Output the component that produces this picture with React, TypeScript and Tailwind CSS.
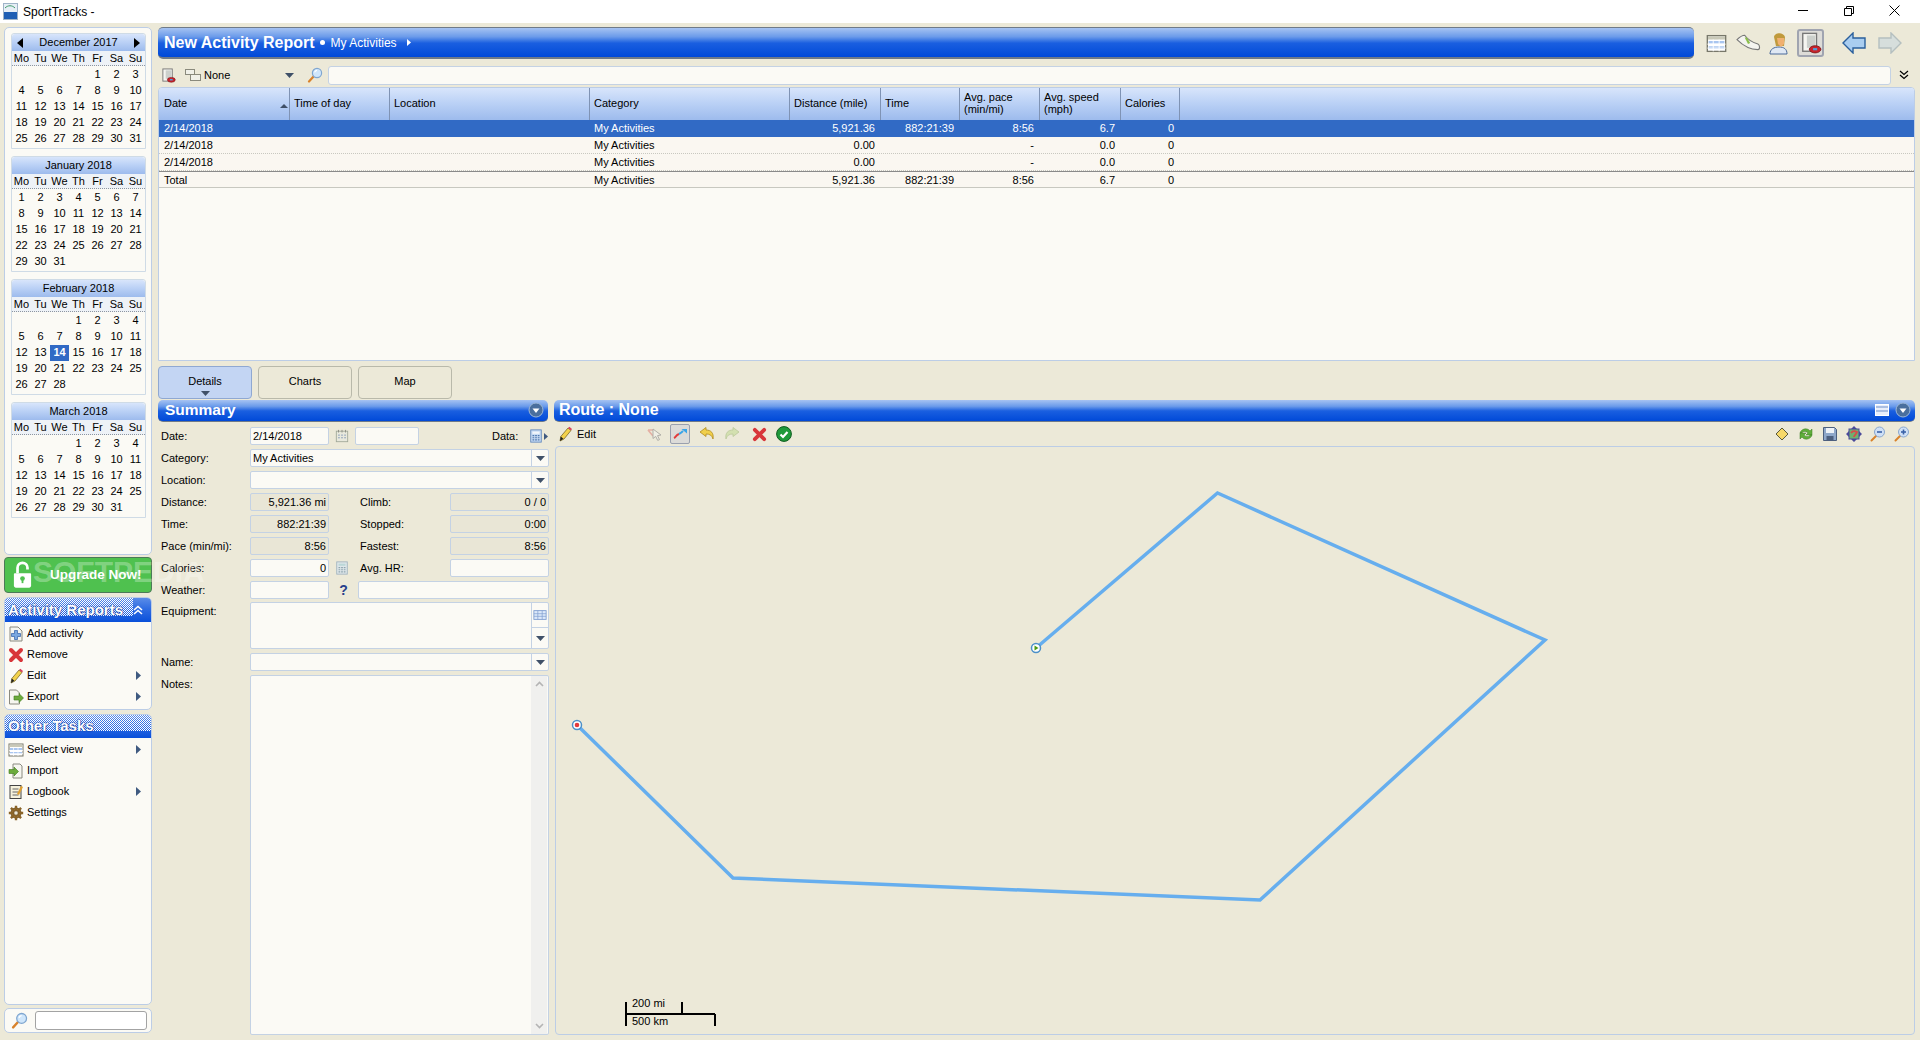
import type { ReactNode } from "react";

const months = [
  { name: "December 2017", start: 4, len: 31, nav: true },
  { name: "January 2018", start: 0, len: 31 },
  { name: "February 2018", start: 3, len: 28, today: 14 },
  { name: "March 2018", start: 3, len: 31 },
];
const dayNames = ["Mo", "Tu", "We", "Th", "Fr", "Sa", "Su"];

const titleBar = "bg-[linear-gradient(#a6c3f2_0%,#6b9bea_30%,#1a5fe0_52%,#0049d8_100%)]";
const taskBar = "bg-[linear-gradient(#5a8ce8_0%,#2f6ce2_45%,#0a50da_100%)]";
const softHeader = "bg-[linear-gradient(#d8e5fb_0%,#bcd2f6_45%,#9dbbed_100%)]";

function Ico({ size = 16, children, className }: { size?: number; children: ReactNode; className?: string }) {
  return (
    <svg width={size} height={size} viewBox="0 0 16 16" className={"shrink-0 " + (className || "")}>
      {children}
    </svg>
  );
}

function Magnifier({ size = 16 }: { size?: number }) {
  return (
    <Ico size={size}>
      <path d="M2 14.5 7 9" stroke="#d9822b" strokeWidth="2.2" strokeLinecap="round" />
      <circle cx="10" cy="6" r="4.6" fill="#cfe6fb" stroke="#7fa6d0" strokeWidth="1.2" />
      <path d="M7.6 5.4a2.6 2.6 0 0 1 2.4-2" stroke="#fff" strokeWidth="1.2" fill="none" />
    </Ico>
  );
}

function Zoomer({ plus }: { plus?: boolean }) {
  return (
    <Ico>
      <path d="M1.5 14.5 6 10" stroke="#d9822b" strokeWidth="2" strokeLinecap="round" />
      <circle cx="9.5" cy="6" r="5" fill="#cfe0f6" stroke="#88a7cf" />
      <path d="M7 6h5" stroke="#3a62a8" strokeWidth="1.6" />
      {plus && <path d="M9.5 3.5v5" stroke="#3a62a8" strokeWidth="1.6" />}
    </Ico>
  );
}

function Caret({ className }: { className?: string }) {
  return (
    <svg width="9" height="5" viewBox="0 0 9 5" className={"shrink-0 " + (className || "")}>
      <path d="M0 0h9L4.5 5z" fill="#3f5068" />
    </svg>
  );
}

function RightArrow() {
  return (
    <svg width="5" height="9" viewBox="0 0 5 9" className="shrink-0 ml-auto mr-[10px]">
      <path d="M0 0l5 4.5L0 9z" fill="#3f5a80" />
    </svg>
  );
}

function RedX({ size = 14 }: { size?: number }) {
  return (
    <Ico size={size}>
      <path d="M3 3l10 10M13 3 3 13" stroke="#d8363a" strokeWidth="4" strokeLinecap="round" />
    </Ico>
  );
}

function Pencil({ size = 16 }: { size?: number }) {
  return (
    <Ico size={size}>
      <path d="M3 15l.8-4.5L11 2l3 2.4-7 8.6z" fill="#f3d24c" stroke="#6a5a1c" strokeWidth=".7" />
      <path d="M11 2l3 2.4 1-1.4L12.4.8z" fill="#d9415f" />
      <path d="M3 15l.8-4.5 2.6 2.2z" fill="#222" />
    </Ico>
  );
}

function PageArrow() {
  return (
    <Ico>
      <path d="M1.5 1h7l3 3v11h-10z" fill="#f6f6f0" stroke="#8a8a80" />
      <path d="M6 7h5V4.500L15.500 9 11 13.500V11H6z" fill="#6cab3c" stroke="#3f7a1e" strokeWidth=".6" />
    </Ico>
  );
}

function ImportIcon() {
  return (
    <Ico>
      <path d="M5 1h7l2 2v12H5z" fill="#f6f6f0" stroke="#8a8a80" />
      <path d="M1 6.500h5V4l4.500 4.500L6 13v-2.500H1z" fill="#6cab3c" stroke="#3f7a1e" strokeWidth=".6" />
    </Ico>
  );
}

function Gear() {
  return (
    <Ico>
      <circle cx="8" cy="8" r="5" fill="#a67c3a" stroke="#6b4c1e" />
      <path d="M8 .8v14.4M.8 8h14.4M2.900 2.900l10.200 10.200M13.100 2.900 2.900 13.100" stroke="#8a6428" strokeWidth="2.4" />
      <circle cx="8" cy="8" r="2.2" fill="#ece9d8" stroke="#6b4c1e" strokeWidth=".7" />
    </Ico>
  );
}

function GridIcon({ size = 16 }: { size?: number }) {
  return (
    <Ico size={size}>
      <rect x="1" y="2" width="14" height="12" fill="#fff" stroke="#77776a" />
      <path d="M1.500 2.500h13V5h-13z" fill="#c9c9b8" />
      <path d="M2 6h12v2H2zM2 10h12v2H2z" fill="#a9c6f0" />
      <path d="M5.500 5v9M10 5v9M1 8.500h14M1 11.500h14" stroke="#fff" strokeWidth=".7" />
    </Ico>
  );
}

function ReportIcon({ size = 16 }: { size?: number }) {
  return (
    <Ico size={size}>
      <rect x="2" y="1" width="10" height="13" fill="#f5f5f0" stroke="#777" />
      <rect x="5" y="2.500" width="6" height="9" fill="#ccd0cc" />
      <ellipse cx="11" cy="12.600" rx="4.200" ry="2.600" fill="#c9232b" stroke="#7a1114" strokeWidth=".6" />
      <path d="M9.500 12.500h3" stroke="#4f9dd8" strokeWidth="1.6" />
    </Ico>
  );
}

function CalcIcon({ className, tint }: { className?: string; tint?: boolean }) {
  return (
    <Ico size={14} className={className}>
      <rect x="2" y="1" width="12" height="14" fill={tint ? "#c8dcf4" : "#dfe7ea"} stroke={tint ? "#5f86bc" : "#9fb2bd"} />
      <rect x="4" y="3" width="8" height="2.500" fill={tint ? "#f2f6fb" : "#bcd7d8"} />
      <path d="M4 7.500h2M7 7.500h2M10 7.500h2M4 10h2M7 10h2M10 10h2M4 12.500h2M7 12.500h2M10 12.500h2" stroke={tint ? "#4f78ae" : "#8ea4ad"} strokeWidth="1.3" />
    </Ico>
  );
}

function Month({ m }: { m: (typeof months)[number] }) {
  return (
    <div className="h-[116px] w-[135px] border border-[#cfdbe6] rounded-t-[3px]">
      <div className={"h-[17px] flex items-center justify-between px-[5px] text-[11px] leading-none rounded-t-[3px] " + softHeader}>
        {m.nav ? <span className="w-0 h-0 border-y-[5px] border-y-transparent border-r-[6px] border-r-black" /> : <span />}
        <span>{m.name}</span>
        {m.nav ? <span className="w-0 h-0 border-y-[5px] border-y-transparent border-l-[6px] border-l-black" /> : <span />}
      </div>
      <div className="h-[15px] grid grid-cols-[repeat(7,19px)] bg-[#eef2f7] border-b border-dotted border-[#8e96a0] text-[11px] leading-[15px] text-center">
        {dayNames.map((d) => (
          <span key={d}>{d}</span>
        ))}
      </div>
      <div className="grid grid-cols-[repeat(7,19px)] auto-rows-[16px] pt-[1px] text-[11px] leading-[15px] text-center">
        {Array.from({ length: m.start }).map((_, i) => (
          <span key={"e" + i} />
        ))}
        {Array.from({ length: m.len }).map((_, i) =>
          m.today === i + 1 ? (
            <span key={i} className="bg-[#316ac5] text-white font-bold">
              {i + 1}
            </span>
          ) : (
            <span key={i}>{i + 1}</span>
          )
        )}
      </div>
    </div>
  );
}

function TaskRow({ icon, label, arrow }: { icon: ReactNode; label: string; arrow?: boolean }) {
  return (
    <div className="h-[21px] flex items-center pl-[3px] gap-[3px] text-[11px]">
      {icon}
      <span>{label}</span>
      {arrow && <RightArrow />}
    </div>
  );
}

function Dither({ className }: { className: string }) {
  return (
    <div
      className={
        "absolute bg-[repeating-conic-gradient(#ffffff_0_25%,transparent_0_50%)] bg-[length:2px_2px] " + className
      }
    />
  );
}

function Sidebar() {
  const heading = "relative [text-shadow:0_0_2px_#06309a,0_0_1px_#06309a]";
  return (
    <div className="w-[148px] shrink-0 flex flex-col">
      <div className="h-[528px] bg-[#fbfaf5] border border-[#bccde6] rounded-[5px] pt-[5px] pl-[6px] flex flex-col gap-[7px]">
        {months.map((m) => (
          <Month key={m.name} m={m} />
        ))}
      </div>
      <div className="h-[36px] mt-[2px] bg-[#4fc14f] border border-[#4c7a58] rounded-[4px] flex items-center pl-[8px] gap-[18px] text-white font-bold text-[13.5px]">
        <svg width="19" height="28" viewBox="0 0 21 30" className="shrink-0">
          <path d="M5 13V7a5.500 5.500 0 0 1 11 0v2" fill="none" stroke="#fff" strokeWidth="3" />
          <path d="M2 13h17a1 1 0 0 1 1 1v13a2 2 0 0 1-2 2H3a2 2 0 0 1-2-2V14a1 1 0 0 1 1-1z" fill="#fff" />
          <circle cx="10.500" cy="19" r="2.600" fill="#4fc14f" />
          <path d="M9.500 20h2v4h-2z" fill="#4fc14f" />
        </svg>
        <span className="relative z-30">Upgrade Now!</span>
      </div>
      <div className="h-[113px] mt-[4px] bg-[#fbfaf5] border border-[#bccde6] rounded-[5px] overflow-hidden">
        <div className={"relative h-[24px] flex items-center pl-[3px] text-white font-bold text-[15px] " + taskBar}>
          <Dither className="left-0 top-0 w-[128px] h-[18px]" />
          <span className={heading}>Activity Reports</span>
          <svg width="10" height="10" viewBox="0 0 10 10" className="absolute right-[8px] top-[7px]">
            <path d="M1 5l4-3.500L9 5M1 9l4-3.500L9 9" fill="none" stroke="#fff" strokeWidth="1.6" />
          </svg>
        </div>
        <div className="pt-[1px]">
          <TaskRow
            label="Add activity"
            icon={
              <Ico>
                <path d="M2 1h8l4 4v10H2z" fill="#f5f5f0" stroke="#8a8a80" />
                <path d="M6.500 4.500h3v3h3v3h-3v3h-3v-3h-3v-3h3z" fill="#7aa8e0" stroke="#2f5ea8" strokeWidth=".7" />
              </Ico>
            }
          />
          <TaskRow label="Remove" icon={<RedX size={16} />} />
          <TaskRow label="Edit" arrow icon={<Pencil />} />
          <TaskRow label="Export" arrow icon={<PageArrow />} />
        </div>
      </div>
      <div className="h-[291px] mt-[4px] bg-[#fbfaf5] border border-[#bccde6] rounded-[5px] overflow-hidden">
        <div className={"relative h-[23px] flex items-center pl-[3px] text-white font-bold text-[15px] " + taskBar}>
          <Dither className="left-0 top-0 w-full h-[16px]" />
          <span className={heading}>Other Tasks</span>
        </div>
        <div className="pt-[1px]">
          <TaskRow label="Select view" arrow icon={<GridIcon />} />
          <TaskRow label="Import" icon={<ImportIcon />} />
          <TaskRow
            label="Logbook"
            arrow
            icon={
              <Ico>
                <rect x="2" y="1.500" width="11" height="13" fill="#f5f1dc" stroke="#444" />
                <path d="M4.500 5h6M4.500 8h6M4.500 11h6" stroke="#666" />
                <path d="M9 10l4-8 2 1-4 8z" fill="#e0a030" />
              </Ico>
            }
          />
          <TaskRow label="Settings" icon={<Gear />} />
        </div>
      </div>
      <div className="h-[25px] mt-[3px] bg-[#fbfaf5] border border-[#bccde6] rounded-[5px] flex items-center pl-[6px] gap-[7px]">
        <Magnifier size={17} />
        <div className="w-[112px] h-[19px] bg-white border border-[#a3a3a3] rounded-[3px]" />
      </div>
    </div>
  );
}

const columnGrid = "grid grid-cols-[131px_100px_200px_200px_91px_79px_80px_81px_59px]";

function ActivityRow({ date, dist, time, pace, speed, selected, total }: { date: string; dist: string; time: string; pace: string; speed: string; selected?: boolean; total?: boolean }) {
  const tone = selected ? "bg-[#316ac5] text-white" : "bg-[#faf7f1] text-black border-b border-dotted border-[#c8c8c0]";
  return (
    <div className={"h-[17px] text-[11px] leading-[16px] " + tone + (total ? " border-t border-t-[#8a8a8a] border-solid" : "")}>
      <div className={columnGrid}>
        <span className="pl-[5px]">{date}</span>
        <span />
        <span />
        <span className="pl-[4px]">My Activities</span>
        <span className="pr-[6px] text-right">{dist}</span>
        <span className="pr-[6px] text-right">{time}</span>
        <span className="pr-[6px] text-right">{pace}</span>
        <span className="pr-[6px] text-right">{speed}</span>
        <span className="pr-[6px] text-right">0</span>
      </div>
    </div>
  );
}

function ActivityTable() {
  const heads = ["Date", "Time of day", "Location", "Category", "Distance (mile)", "Time", "Avg. pace\n(min/mi)", "Avg. speed\n(mph)", "Calories"];
  return (
    <div className="h-[274px] bg-[#fbfaf5] border border-[#bccde6] rounded-t-[4px] overflow-hidden">
      <div className={"h-[32px] text-[11px] " + softHeader}>
        <div className={"h-full " + columnGrid}>
          {heads.map((h, i) => (
            <div key={h} className={"relative flex items-center pb-[2px] leading-[12px] whitespace-pre-line border-r border-[#7f93b4] " + (i === 0 ? "pl-[5px]" : "pl-[4px]")}>
              {h}
              {i === 0 && <span className="absolute right-[1px] top-[16px] w-0 h-0 border-x-[4px] border-x-transparent border-b-[4px] border-b-[#3f5068]" />}
            </div>
          ))}
        </div>
      </div>
      <ActivityRow selected date="2/14/2018" dist="5,921.36" time="882:21:39" pace="8:56" speed="6.7" />
      <ActivityRow date="2/14/2018" dist="0.00" time="" pace="-" speed="0.0" />
      <ActivityRow date="2/14/2018" dist="0.00" time="" pace="-" speed="0.0" />
      <ActivityRow total date="Total" dist="5,921.36" time="882:21:39" pace="8:56" speed="6.7" />
    </div>
  );
}

function Box({ className, children, ro }: { className?: string; children?: ReactNode; ro?: boolean }) {
  return (
    <div className={"h-[18px] border border-[#c4d2e4] rounded-[2px] flex items-center px-[2px] text-[11px] leading-none shrink-0 " + (ro ? "bg-[#e9e6d6] justify-end " : "bg-[#fbfaf5] ") + (className || "")}>
      {children}
    </div>
  );
}

function Combo({ value }: { value?: string }) {
  return (
    <div className="w-[299px] h-[18px] border border-[#c4d2e4] rounded-[2px] bg-[#fbfaf5] flex items-center text-[11px] leading-none">
      <span className="flex-1 pl-[2px]">{value}</span>
      <span className="w-[17px] h-full border-l border-[#c4d2e4] flex items-center justify-center">
        <Caret />
      </span>
    </div>
  );
}

function Row({ label, children }: { label: string; children: ReactNode }) {
  return (
    <div className="h-[18px] flex items-center text-[11px]">
      <span className="w-[92px] shrink-0 pl-[3px]">{label}</span>
      {children}
    </div>
  );
}

function PairRow({ label, value, label2, value2, ro }: { label: string; value: string; label2: string; value2?: string; ro?: boolean }) {
  return (
    <Row label={label}>
      <Box ro={ro} className={"w-[79px] " + (ro ? "" : "justify-end")}>{value}</Box>
      {ro ? <span className="w-[31px]" /> : <span className="w-[31px] pl-[6px]"><CalcIcon /></span>}
      <span className="w-[90px]">{label2}</span>
      <Box ro={ro} className={"w-[99px] " + (ro ? "" : "justify-end")}>{value2}</Box>
    </Row>
  );
}

function Summary() {
  return (
    <div className="w-[392px] shrink-0 flex flex-col">
      <div className={"h-[22px] w-[390px] flex items-center pl-[7px] pr-[4px] pb-[1px] justify-between rounded-[5px] border-b border-[#6f7a88] text-white font-bold text-[15.5px] " + titleBar}>
        Summary
        <svg width="16" height="16" viewBox="0 0 16 16">
          <circle cx="8" cy="8" r="7" fill="#4a6f9e" stroke="#9db7d6" />
          <path d="M4.500 6.500h7L8 11z" fill="#fff" />
        </svg>
      </div>
      <div className="flex flex-col gap-[4px] pt-[5px] flex-1">
        <Row label="Date:">
          <Box className="w-[79px]">2/14/2018</Box>
          <span className="w-[26px] pl-[6px]">
            <Ico size={14}>
              <rect x="1.500" y="2.500" width="13" height="12" fill="#e8e8dc" stroke="#a0a898" />
              <path d="M4 1v3M8 1v3M12 1v3" stroke="#8a8a80" />
              <path d="M3.500 7h2M7 7h2M10.500 7h2M3.500 10h2M7 10h2M10.500 10h2" stroke="#7f93b4" />
            </Ico>
          </span>
          <Box className="w-[64px]" />
          <span className="ml-[73px] w-[37px]">Data:</span>
          <CalcIcon tint />
          <svg width="4" height="7" viewBox="0 0 4 7" className="ml-[1px]">
            <path d="M0 0l4 3.500L0 7z" fill="#3f5a80" />
          </svg>
        </Row>
        <Row label="Category:">
          <Combo value="My Activities" />
        </Row>
        <Row label="Location:">
          <Combo />
        </Row>
        <PairRow ro label="Distance:" value="5,921.36 mi" label2="Climb:" value2="0 / 0" />
        <PairRow ro label="Time:" value="882:21:39" label2="Stopped:" value2="0:00" />
        <PairRow ro label="Pace (min/mi):" value="8:56" label2="Fastest:" value2="8:56" />
        <PairRow label="Calories:" value="0" label2="Avg. HR:" />
        <Row label="Weather:">
          <Box className="w-[79px]" />
          <span className="w-[29px] text-center font-bold text-[14px] text-[#27408b]">?</span>
          <Box className="w-[191px]" />
        </Row>
        <div className="flex text-[11px] mt-[-1px]">
          <span className="w-[92px] shrink-0 pl-[3px] pt-[1px]">Equipment:</span>
          <div className="w-[299px] h-[47px] border border-[#c4d2e4] rounded-[2px] bg-[#fbfaf5] flex justify-end">
            <div className="w-[17px] border-l border-[#c4d2e4] flex flex-col">
              <div className="h-[25px] border-b border-[#c4d2e4] flex items-center justify-center">
                <Ico size={14}>
                  <rect x="1" y="3" width="14" height="10" fill="#dbe8fa" stroke="#7f9ed0" />
                  <path d="M1 6.500h14M1 9.500h14M5.500 3v10M10.500 3v10" stroke="#7f9ed0" strokeWidth=".8" />
                </Ico>
              </div>
              <div className="flex-1 flex items-center justify-center">
                <Caret />
              </div>
            </div>
          </div>
        </div>
        <Row label="Name:">
          <Combo />
        </Row>
        <div className="flex flex-1 text-[11px] mb-[5px]">
          <span className="w-[92px] shrink-0 pl-[3px] pt-[1px]">Notes:</span>
          <div className="w-[299px] border border-[#c4d2e4] rounded-[2px] bg-[#fbfaf5] flex justify-end">
            <div className="w-[16px] bg-[#f0f0ee] flex flex-col items-center justify-between py-[5px] mr-[1px]">
              <svg width="9" height="6" viewBox="0 0 9 6"><path d="M1 5l3.500-3.500L8 5" fill="none" stroke="#b4b4b4" strokeWidth="1.6" /></svg>
              <svg width="9" height="6" viewBox="0 0 9 6"><path d="M1 1l3.500 3.500L8 1" fill="none" stroke="#b4b4b4" strokeWidth="1.6" /></svg>
            </div>
          </div>
        </div>
      </div>
    </div>
  );
}

function RouteToolbar() {
  return (
    <div className="h-[24px] flex items-center pl-[3px] pr-[5px] text-[11px]">
      <Pencil />
      <span className="ml-[4px]">Edit</span>
      <span className="ml-[49px] w-[20px] flex justify-center opacity-60">
        <Ico>
          <path d="M1 4h6M1 4l5 6" stroke="#e08a80" strokeWidth="1.6" fill="none" />
          <path d="M6 3l8 6-3.500.6 2 4-1.800.8-2-4L6 12.500z" fill="#f4f4ee" stroke="#888" />
        </Ico>
      </span>
      <span className="w-[20px] h-[20px] flex items-center justify-center border border-[#9aa0ae] rounded-[2px] bg-[#dcdbd8] ml-[5px]">
        <Ico>
          <path d="M2 12c2-1 2-3 5-4" stroke="#e33b3b" strokeWidth="2" fill="none" />
          <path d="M7 8c2-1 3-2 4-3" stroke="#3aa5e8" strokeWidth="2" fill="none" />
          <path d="M9.500 3H15v4.500z" fill="#3aa5e8" />
        </Ico>
      </span>
      <span className="ml-[9px]">
        <Ico>
          <path d="M1 6l6-4.500V4c5 0 8 3 7 9-1-3.500-3-5-7-5v2.500z" fill="#f0cf4a" stroke="#b08a1c" strokeWidth=".8" />
        </Ico>
      </span>
      <span className="ml-[9px] opacity-50">
        <Ico>
          <path d="M15 6 9 1.500V4C4 4 1 7 2 13c1-3.500 3-5 7-5v2.500z" fill="#bcd98a" stroke="#8aa860" strokeWidth=".8" />
        </Ico>
      </span>
      <span className="ml-[12px]">
        <RedX size={15} />
      </span>
      <span className="ml-[9px]">
        <Ico>
          <circle cx="8" cy="8" r="7.400" fill="#1f9a3a" stroke="#0f5c20" />
          <path d="M4.500 8.500l2.500 2.500 4.500-5" stroke="#fff" strokeWidth="2.200" fill="none" />
        </Ico>
      </span>
      <div className="ml-auto flex items-center gap-[8px]">
        <Ico>
          <path d="M8 2l6 6-6 6-6-6z" fill="#f6d868" stroke="#5a5a3c" />
        </Ico>
        <Ico>
          <path d="M2 7c1-4 7-6 10-2l2-2v6H8l2-2c-2-2-5-2-6 0z" fill="#5fae3a" stroke="#3a7a20" strokeWidth=".5" />
          <path d="M14 9c-1 4-7 6-10 2l-2 2V7h6l-2 2c2 2 5 2 6 0z" fill="#5fae3a" stroke="#3a7a20" strokeWidth=".5" />
        </Ico>
        <Ico>
          <path d="M1.500 1.500h11l2 2v11h-13z" fill="#8ea7c9" stroke="#4c5f7e" />
          <rect x="4" y="2" width="8" height="5" fill="#eef2f7" />
          <rect x="4.500" y="10" width="7" height="4.500" fill="#4c5f7e" />
        </Ico>
        <Ico>
          <path d="M8 0l3 3H5zM8 16l-3-3h6zM0 8l3-3v6zM16 8l-3 3V5z" fill="#4a4a9a" />
          <rect x="3" y="3" width="10" height="10" fill="#6fb070" stroke="#4a4a9a" />
          <path d="M5 7c2-3 4-2 6-1-1 3-3 3-3 5" stroke="#d84a4a" strokeWidth="1.800" fill="none" />
        </Ico>
        <Zoomer />
        <Zoomer plus />
      </div>
    </div>
  );
}

function RouteCanvas() {
  return (
    <div className="relative flex-1 mb-[5px] border border-[#bccde6] rounded-[4px] bg-[#ece9d8] ml-[1px]">
      <svg className="absolute left-0 top-0 w-full h-full">
        <polyline points="480,201 661.500,46 989,193 704,453 177,431 21,278" fill="none" stroke="#66aeee" strokeWidth="3.500" />
        <circle cx="480" cy="201" r="4.500" fill="#fff" stroke="#4c90c8" strokeWidth="1.500" />
        <path d="M478.500 198.500l4 2.500-4 2.500z" fill="#4c9a10" />
        <circle cx="21" cy="278" r="4.500" fill="#fff" stroke="#4c90c8" strokeWidth="1.500" />
        <circle cx="21" cy="278" r="2.300" fill="#e23a3a" />
        <path d="M70 555v24M70 567h89M126 555v12M159 567v12" stroke="#000" strokeWidth="2" fill="none" />
      </svg>
      <span className="absolute left-[76px] top-[550px] text-[11px] leading-[13px]">200 mi</span>
      <span className="absolute left-[76px] top-[568px] text-[11px] leading-[13px]">500 km</span>
    </div>
  );
}

function RoutePanel() {
  return (
    <div className="flex-1 flex flex-col ml-[4px] min-w-0">
      <div className={"h-[22px] flex items-center pl-[5px] pr-[4px] pb-[1px] rounded-[5px] border-b border-[#6f7a88] text-white font-bold text-[16px] " + titleBar}>
        Route : None
        <svg width="14" height="14" viewBox="0 0 14 14" className="ml-auto mr-[6px]">
          <rect x=".5" y="1.500" width="13" height="11" fill="#e8eefb" stroke="#fff" />
          <path d="M1 4h12M1 8h12" stroke="#6f8fc8" />
        </svg>
        <svg width="16" height="16" viewBox="0 0 16 16">
          <circle cx="8" cy="8" r="7" fill="#4a6f9e" stroke="#9db7d6" />
          <path d="M4.500 6.500h7L8 11z" fill="#fff" />
        </svg>
      </div>
      <RouteToolbar />
      <RouteCanvas />
    </div>
  );
}

export default function App() {
  return (
    <div className="relative h-[1040px] w-[1920px] overflow-hidden bg-[#ece9d8] text-black font-['Liberation_Sans',Arial,sans-serif]">
      <div className="h-[23px] bg-white flex items-center pl-[3px] text-[12px]">
        <svg width="15" height="17" viewBox="0 0 15 17" className="shrink-0">
          <rect x=".5" y=".5" width="14" height="16" fill="#e6eef6" stroke="#9fb4c8" />
          <path d="M2 5c3-3 7-3 10 0" stroke="#3d9a6a" fill="none" />
          <rect x="1" y="9" width="13" height="7" fill="#1f5fb4" />
        </svg>
        <span className="ml-[5px]">SportTracks -</span>
        <div className="ml-auto flex items-center">
          <svg width="46" height="23" viewBox="0 0 46 23"><path d="M18 10.500h10" stroke="#000" /></svg>
          <svg width="46" height="23" viewBox="0 0 46 23" fill="none"><path d="M18.500 8.500h7v7h-7zM20.500 8.500v-2h7v7h-2" stroke="#000" /></svg>
          <svg width="46" height="23" viewBox="0 0 46 23" fill="none" className="mr-[2px]"><path d="M17.500 5.500l10 10M27.500 5.500l-10 10" stroke="#000" /></svg>
        </div>
      </div>
      <div className="flex pt-[4px] pl-[4px] pr-[5px] h-[1017px]">
        <Sidebar />
        <div className="flex-1 ml-[6px] flex flex-col min-w-0">
          <div className="h-[32px] flex items-center">
            <div className={"flex-1 h-full flex items-center pl-[6px] rounded-[5px] border-t border-b-2 border-t-[#6f7a88] border-b-[#6f7a88] text-white " + titleBar}>
              <span className="font-bold text-[16px]">New Activity Report</span>
              <span className="ml-[5px] w-[5px] h-[5px] rounded-full bg-white" />
              <span className="ml-[6px] text-[12px]">My Activities</span>
              <svg width="4" height="7" viewBox="0 0 4 7" className="ml-[10px]"><path d="M0 0l4 3.500L0 7z" fill="#fff" /></svg>
            </div>
            <div className="w-[221px] shrink-0 flex items-center pl-[12px]">
              <GridIcon size={21} />
              <span className="ml-[7px]">
                <svg width="28" height="22" viewBox="0 0 24 20">
                  <path d="M2 7c3-3 5-4 7-4 2 3 6 6 12 8 2 1 2 5 0 5-7 0-13-3-19-9z" fill="#f4f4f0" stroke="#777" />
                  <path d="M9 5l3 6 2-1-3-5z" fill="#8cbf4a" />
                </svg>
              </span>
              <span className="ml-[7px]">
                <svg width="20" height="24" viewBox="0 0 20 24">
                  <path d="M1 23c0-5 4-7 9-7s8 2 8 7z" fill="#dfe8f4" stroke="#4a6a9a" />
                  <path d="M5 6c0-4 9-6 11 0l-1 9H7z" fill="#c09a3c" />
                  <path d="M8 7h7v6l-3 3-3-3z" fill="#f0b070" />
                </svg>
              </span>
              <span className="ml-[8px] w-[27px] h-[28px] flex items-center justify-center border-2 border-[#a0a4b0] rounded-[3px] bg-[#dddcd8]">
                <ReportIcon size={22} />
              </span>
              <span className="ml-[18px]">
                <svg width="24" height="22" viewBox="0 0 24 22">
                  <path d="M1 11 11 1v5h12v10H11v5z" fill="#a9cdf0" stroke="#2a5f9c" strokeWidth="1.400" />
                </svg>
              </span>
              <span className="ml-[12px] opacity-60">
                <svg width="24" height="22" viewBox="0 0 24 22">
                  <path d="M23 11 13 1v5H1v10h12v5z" fill="#c8d8e0" stroke="#90a4b0" strokeWidth="1.400" />
                </svg>
              </span>
            </div>
          </div>
          <div className="h-[28px] flex items-center pl-[3px] pt-[4px] text-[11px]">
            <ReportIcon size={15} />
            <svg width="16" height="12" viewBox="0 0 16 12" className="ml-[9px]">
              <rect x=".5" y=".5" width="9" height="5" fill="#f0f0e8" stroke="#8a8a7c" />
              <rect x="5.500" y="5.500" width="10" height="6" fill="#f0f0e8" stroke="#8a8a7c" />
            </svg>
            <span className="ml-[3px] w-[73px]">None</span>
            <Caret className="ml-[8px]" />
            <span className="ml-[13px]">
              <Magnifier />
            </span>
            <div className="ml-[5px] w-[1563px] h-[19px] bg-[#fbfaf5] border border-[#c4d2e4] rounded-[3px]" />
            <svg width="10" height="10" viewBox="0 0 10 10" className="ml-[8px]">
              <path d="M1 1l4 3.500L9 1M1 5l4 3.500L9 5" fill="none" stroke="#000" strokeWidth="1.200" />
            </svg>
          </div>
          <ActivityTable />
          <div className="h-[33px] mt-[5px] flex gap-[6px] text-[11px]">
            <div className="relative w-[94px] flex justify-center pt-[6px] border border-[#8fa8d2] rounded-[4px] bg-[#c3d5f3]">
              Details
              <Caret className="absolute bottom-[2px] left-[42px]" />
            </div>
            <div className="w-[94px] flex justify-center pt-[6px] border border-[#b9b9aa] rounded-[4px]">Charts</div>
            <div className="w-[94px] flex justify-center pt-[6px] border border-[#b9b9aa] rounded-[4px]">Map</div>
          </div>
          <div className="flex flex-1 mt-[1px] min-h-0">
            <Summary />
            <RoutePanel />
          </div>
        </div>
      </div>
      <div className="absolute left-[33px] top-[550px] z-20 pointer-events-none text-white/30 font-bold text-[30px] leading-[44px]">
        SOFTPEDIA
      </div>
    </div>
  );
}
